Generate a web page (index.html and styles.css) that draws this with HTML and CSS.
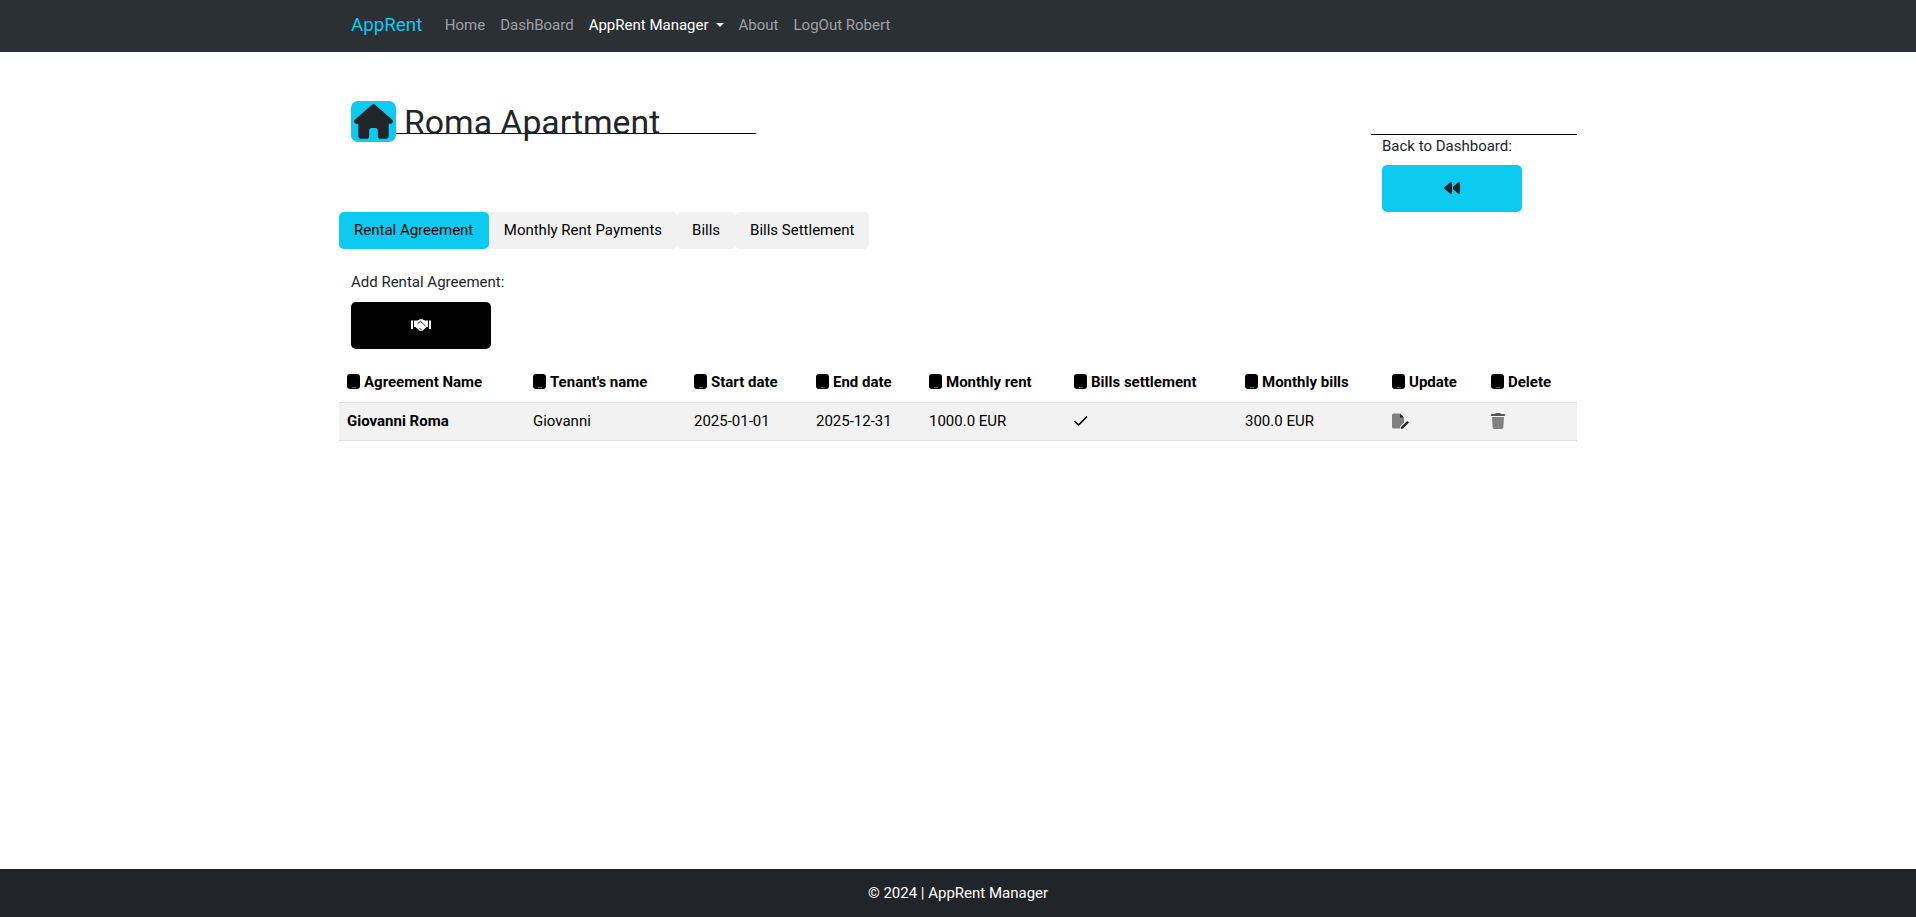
FILE: index.html
```html
<!DOCTYPE html>
<html lang="en">
<head>
    <meta charset="UTF-8">
    <title>AppRent Manager</title>
    <link rel="stylesheet" href="styles.css">
</head>
<body>
    <!-- Top navigation -->
    <nav class="navbar">
        <a class="brand" href="#">AppRent</a>
        <a class="nav-link" href="#">Home</a>
        <a class="nav-link" href="#">DashBoard</a>
        <a class="nav-link nav-active" href="#">AppRent Manager<span class="caret"></span></a>
        <a class="nav-link" href="#">About</a>
        <a class="nav-link" href="#">LogOut Robert</a>
    </nav>

    <main class="container">
        <!-- Apartment header -->
        <div class="page-head">
            <div class="title-line">
                <span class="house-badge">
                    <svg viewBox="0 0 576 512" class="house-icon"><path d="M575.8 255.5c0 18-15 32.1-32 32.1h-32l.7 160.2c0 2.700-.2 5.400-.5 8.100V472c0 22.100-17.900 40-40 40H456c-1.100 0-2.200 0-3.300-.1-1.400.1-2.800.1-4.200.1H416 392c-22.100 0-40-17.900-40-40V448 384c0-17.700-14.300-32-32-32H256c-17.700 0-32 14.300-32 32v64 24c0 22.100-17.900 40-40 40H160 128.100c-1.500 0-3-.1-4.500-.2-1.200.1-2.400.2-3.600.2H104c-22.100 0-40-17.900-40-40V360c0-.9 0-1.900.1-2.800V287.600H32c-18 0-32-14-32-32.100 0-9 3-17 10-24L266.400 8c7-7 15-8 22-8s15 2 21 7L564.800 231.500c8 7 12 15 11 24z"/></svg>
                </span>
                <h1 class="page-title">Roma Apartment</h1>
            </div>
            <div class="back-box">
                <div class="back-label">Back to Dashboard:</div>
                <a class="action-btn btn-info" href="#">
                    <svg viewBox="0 0 512 512" class="btn-icon back-icon"><path d="M459.500 440.600c9.500 7.900 22.800 9.700 34.100 4.400s18.400-16.600 18.400-29V96c0-12.400-7.200-23.700-18.400-29s-24.500-3.600-34.100 4.400L288 214.300V256v41.700L459.500 440.600zM256 352V256 128 96c0-12.400-7.200-23.700-18.400-29s-24.500-3.600-34.100 4.400l-192 160C4.200 237.500 0 246.500 0 256s4.200 18.500 11.500 24.600l192 160c9.500 7.900 22.800 9.700 34.100 4.400s18.400-16.600 18.400-29V352z"/></svg>
                </a>
            </div>
        </div>

        <!-- Tabs -->
        <div class="tabs">
            <button class="tab tab-active">Rental Agreement</button>
            <button class="tab">Monthly Rent Payments</button>
            <button class="tab">Bills</button>
            <button class="tab">Bills Settlement</button>
        </div>

        <div class="add-box">
            <div class="add-label">Add Rental Agreement:</div>
            <a class="action-btn btn-dark" href="#">
                <svg viewBox="0 0 20 12" class="shake-icon">
                    <path d="M0 1.500h2v8.500H0zM18 1.500h2v8.500h-2z"/>
                    <path d="M3 1.500h3.500L9 .3h2.500L14 1.500h3V8h-1.500L11.500 11.700h-3L4.500 8H3z"/>
                    <path d="M6.500 5 9.500 2.300l5 4.700M8.500 9 10.500 11" class="shake-line"/>
                </svg>
            </a>
        </div>

        <!-- Agreements table -->
        <table class="data-table">
            <colgroup>
                <col class="col-name"><col class="col-tenant"><col class="col-start"><col class="col-end">
                <col class="col-rent"><col class="col-settle"><col class="col-bills"><col class="col-update"><col class="col-delete">
            </colgroup>
            <thead>
                <tr>
                    <th><span class="tablet"></span>Agreement Name</th>
                    <th><span class="tablet"></span>Tenant's name</th>
                    <th><span class="tablet"></span>Start date</th>
                    <th><span class="tablet"></span>End date</th>
                    <th><span class="tablet"></span>Monthly rent</th>
                    <th><span class="tablet"></span>Bills settlement</th>
                    <th><span class="tablet"></span>Monthly bills</th>
                    <th><span class="tablet"></span>Update</th>
                    <th><span class="tablet"></span>Delete</th>
                </tr>
            </thead>
            <tbody>
                <tr>
                    <td class="cell-strong">Giovanni Roma</td>
                    <td>Giovanni</td>
                    <td>2025-01-01</td>
                    <td>2025-12-31</td>
                    <td>1000.0 EUR</td>
                    <td>
                        <svg viewBox="0 0 16 16" class="row-icon check-icon"><path d="M.5 8 4.500 12 13 3.500"/></svg>
                    </td>
                    <td>300.0 EUR</td>
                    <td>
                        <svg viewBox="0 0 18 16" class="row-icon edit-icon">
                            <path class="grey-fill" d="M1.500 0.500H7.500L12 5v4.500l-3.500 3.500-.5 2.500H1.500A1.500 1.500 0 0 1 0 14v-12A1.500 1.500 0 0 1 1.500 0.500z"/>
                            <path class="dark-fill" d="M8 0.500 12 4.500H8zM15.500 8l1.500 1.500-6 6-2.200.4.400-2.200z"/>
                        </svg>
                    </td>
                    <td>
                        <svg viewBox="0 0 448 512" class="row-icon trash-icon">
                            <path class="lid-fill" d="M135.200 17.700 128 32H32C14.300 32 0 46.300 0 64S14.300 96 32 96H416c17.700 0 32-14.300 32-32s-14.300-32-32-32H320l-7.200-14.300C307.400 6.800 296.300 0 284.200 0H163.800c-12.100 0-23.200 6.800-28.600 17.700z"/>
                            <path class="grey-fill" d="M416 128H32L53.200 467c1.600 25.300 22.600 45 47.900 45H346.900c25.300 0 46.300-19.700 47.900-45L416 128z"/>
                        </svg>
                    </td>
                </tr>
            </tbody>
        </table>
    </main>

    <footer class="footer">© 2024 | AppRent Manager</footer>
</body>
</html>
```

FILE: styles.css
```css
/* base */
* {
    margin: 0;
    padding: 0;
    box-sizing: border-box;
}

body {
    display: flex;
    flex-direction: column;
    min-height: 100vh;
    font-family: Roboto, "Liberation Sans", sans-serif;
    font-size: 15px;
    line-height: 1.5;
    color: #212529;
    background: #fff;
}

a {
    text-decoration: none;
}

/* navbar */
.navbar {
    display: flex;
    align-items: center;
    height: 52px;
    padding: 0 0 2px 351px;
    background: #2b3035;
}

.brand {
    margin-right: 15px;
    font-size: 18.750px;
    color: #0dcaf0;
}

.nav-link {
    padding: 0 7.500px;
    color: rgba(255, 255, 255, 0.55);
}

.nav-active {
    color: #fff;
}

.caret {
    display: inline-block;
    margin-left: 7px;
    vertical-align: 3px;
    border-top: 4.500px solid #fff;
    border-left: 4.500px solid transparent;
    border-right: 4.500px solid transparent;
}

/* main content */
.container {
    flex: 1;
    width: 1238px;
    margin-left: 339px;
}

.page-head {
    display: flex;
    justify-content: space-between;
    padding: 49px 0 0 12px;
}

.title-line {
    display: flex;
    width: 405px;
    height: 33px;
    border-bottom: 1px solid #000;
}

.house-badge {
    flex: none;
    display: flex;
    justify-content: center;
    align-items: center;
    width: 45px;
    height: 41px;
    border-radius: 7px;
    background: #0dcaf0;
}

.house-icon {
    width: 39px;
    height: 35px;
    fill: #212529;
}

.page-title {
    margin: -2px 0 0 8px;
    font-size: 33.750px;
    font-weight: 400;
    line-height: 48px;
    white-space: nowrap;
}

.back-box {
    width: 206px;
    margin-top: 33px;
    padding-left: 11px;
    border-top: 1px solid #000;
}

.back-label {
    line-height: 23px;
    margin-bottom: 7px;
}

.action-btn {
    display: flex;
    justify-content: center;
    align-items: center;
    width: 140px;
    height: 47px;
    border-radius: 5px;
}

.btn-info {
    background: #0dcaf0;
}

.btn-dark {
    background: #000;
}

.btn-icon {
    width: 16px;
    height: 16px;
    margin-bottom: 1px;
}

.back-icon {
    fill: #212529;
}

.shake-icon {
    width: 20px;
    height: 12px;
    margin-bottom: 1px;
    fill: #fff;
}

.shake-line {
    fill: none;
    stroke: #000;
    stroke-width: 0.800;
}

/* tabs */
.tabs {
    display: flex;
}

.tab {
    height: 37px;
    padding: 0 15px;
    border: none;
    border-radius: 5px;
    font: inherit;
    color: #000;
    background: #f1f1f1;
}

.tab-active {
    padding-right: 15.500px;
    background: #0dcaf0;
}

.add-box {
    padding: 20px 12px 0;
}

.add-label {
    line-height: 26px;
    margin-bottom: 7px;
}

/* table */
.data-table {
    width: 100%;
    margin-top: 16px;
    border-collapse: collapse;
    table-layout: fixed;
    color: #000;
}

.col-name { width: 186px; }
.col-tenant { width: 161px; }
.col-start { width: 122px; }
.col-end { width: 113px; }
.col-rent { width: 145px; }
.col-settle { width: 171px; }
.col-bills { width: 147px; }
.col-update { width: 99px; }
.col-delete { width: 94px; }

.data-table th {
    height: 37px;
    padding: 0 8px 2px;
    text-align: left;
    font-weight: 700;
    white-space: nowrap;
    border-bottom: 1px solid #dee2e6;
}

.data-table td {
    height: 38px;
    padding: 0 8px;
    background: #f2f2f2;
    border-bottom: 1px solid #dee2e6;
}

.cell-strong {
    font-weight: 700;
}

.tablet {
    display: inline-block;
    position: relative;
    width: 13px;
    height: 15px;
    margin-right: 4px;
    vertical-align: -2px;
    border-radius: 3px;
    background: #000;
}

/* little home-button line on the tablet glyph */
.tablet::after {
    content: "";
    position: absolute;
    left: 5px;
    bottom: 1px;
    width: 4px;
    height: 1px;
    background: #666;
}

.row-icon {
    display: block;
}

.check-icon {
    width: 16px;
    height: 16px;
    fill: none;
    stroke: #000;
    stroke-width: 1.600;
}

.edit-icon {
    width: 18px;
    height: 16px;
}

.grey-fill {
    fill: #808080;
}

.dark-fill {
    fill: #212529;
}

.lid-fill {
    fill: #555;
}

.trash-icon {
    width: 14px;
    height: 16px;
}

/* footer */
.footer {
    flex: none;
    height: 48px;
    line-height: 48px;
    text-align: center;
    color: #fff;
    background: #212529;
}
```
